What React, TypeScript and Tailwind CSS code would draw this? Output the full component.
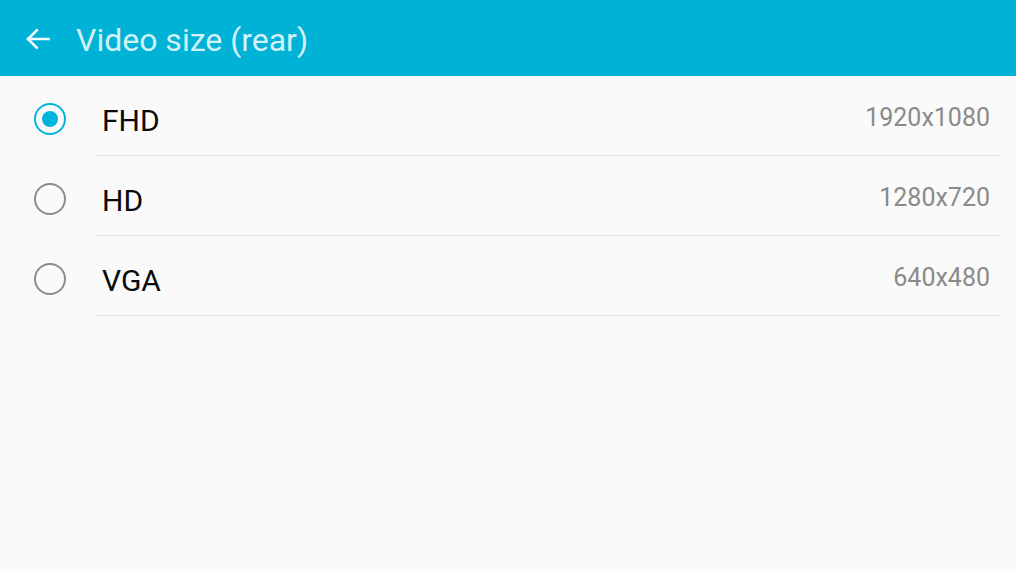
import React from "react";

const items = [
  { label: "FHD", value: "1920x1080", selected: true },
  { label: "HD", value: "1280x720", selected: false },
  { label: "VGA", value: "640x480", selected: false },
];

function Radio({ selected }: { selected: boolean }) {
  return selected ? (
    <div className="w-[32px] h-[32px] rounded-full border-[2px] border-[#00b4dc] flex items-center justify-center">
      <div className="w-[16px] h-[16px] rounded-full bg-[#00b4dc]" />
    </div>
  ) : (
    <div className="w-[32px] h-[32px] rounded-full border-[2px] border-[#8c8c8c]" />
  );
}

export default function App() {
  return (
    <div
      className="w-[1016px] h-[572px] bg-[#fafafa] flex flex-col overflow-hidden"
      style={{ fontFamily: "Roboto, 'Noto Sans', sans-serif" }}
    >
      <div className="h-[76px] bg-[#00b2d6] flex items-center shrink-0">
        <div className="w-[76px] h-[76px] flex items-center justify-center pt-[2px]">
          <svg width="30" height="30" viewBox="0 0 24 24" fill="none">
            <path
              d="M20.5 12H4M11 5L4 12L11 19"
              stroke="#f2fbfd"
              strokeWidth="2.1"
              strokeLinecap="square"
            />
          </svg>
        </div>
        <div className="text-[32px] text-[#d3f1f8] leading-none pt-[4px]">Video size (rear)</div>
      </div>
      <div className="flex flex-col">
        {items.map((it) => (
          <div key={it.label} className="h-[80px] flex">
            <div className="w-[96px] flex items-center justify-center pl-[4px] pt-[6px]">
              <Radio selected={it.selected} />
            </div>
            <div className="flex-1 mr-[16px] border-b border-[#e2e2e2] flex items-center justify-between pl-[6px] pr-[10px]">
              <span className="text-[30px] text-[#0a0a0a] pt-[10px]">{it.label}</span>
              <span className="text-[25px] text-[#8a8a8a] pt-[4px]">{it.value}</span>
            </div>
          </div>
        ))}
      </div>
    </div>
  );
}
